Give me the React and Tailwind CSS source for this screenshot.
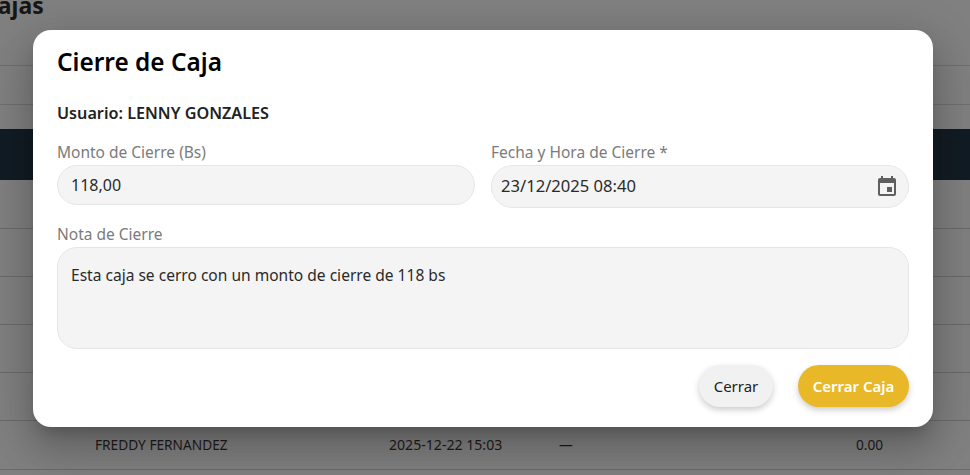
const font = "font-['Noto_Sans','Open_Sans',sans-serif]";

function Row({ name, date, dash, amount, height = "h-12" }) {
  return (
    <div className={`${height} border-b border-[#6a6a6a] flex items-center text-[13.7px] text-[#1f1a1a]`}>
      <span className="w-[389px] pl-[95px]">{name}</span>
      <span className="w-[170px] text-[14.1px]">{date}</span>
      <span className="w-[297px]">{dash}</span>
      <span>{amount}</span>
    </div>
  );
}

function Field({ label, className, children }) {
  return (
    <div className={className}>
      <label className="block text-[15.5px] leading-5 text-[#7b7b7b] mb-[3px]">{label}</label>
      {children}
    </div>
  );
}

export default function App() {
  return (
    <div className={`relative h-[475px] w-[970px] overflow-hidden bg-[#808080] ${font}`}>
      {/* pagina de fondo */}
      <div className="text-[23px] font-bold leading-none text-[#161616] -ml-[17px] -mt-[8px] h-[74px] border-b border-[#6f6f6f] pt-[2px]">Cajas</div>
      <div className="h-[39px] border-b border-[#6f6f6f]"></div>
      <div className="h-[24px]"></div>
      <div className="h-[51px] bg-[#121c24]"></div>
      <Row height="h-[49px]" />
      <Row />
      <Row />
      <Row />
      <Row />
      <Row height="h-[49px]" name="FREDDY FERNANDEZ" date="2025-12-22 15:03" dash="—" amount="0.00" />

      <div className="absolute left-[33px] top-[30px] w-[900px] h-[397px] bg-white rounded-[18px] px-6 pt-[17px] shadow-[0_11px_15px_-7px_rgba(0,0,0,0.2),0_24px_38px_3px_rgba(0,0,0,0.14),0_9px_46px_8px_rgba(0,0,0,0.12)]">
        <h2 className="text-[24.4px] leading-[30px] font-semibold text-black">Cierre de Caja</h2>
        <p className="mt-[26px] text-[16.2px] leading-5 font-semibold text-[#222]">Usuario: LENNY GONZALES</p>
        <div className="mt-[19px] flex gap-4 items-start">
          <Field label="Monto de Cierre (Bs)" className="flex-1">
            <input readOnly value="118,00" className="w-full h-10 px-[13px] rounded-[20px] bg-[#f4f4f4] border border-[#e6e6e6] text-[16px] text-[#2a2a2a] outline-none" />
          </Field>
          <Field label="Fecha y Hora de Cierre *" className="flex-1">
            <div className="flex items-center justify-between h-[43px] pl-[9px] pr-[9px] rounded-[22px] bg-[#f4f4f4] border border-[#e6e6e6] text-[16.6px] text-[#2a2a2a]">
              <span>23/12/2025 08:40</span>
              <svg width="24" height="24" viewBox="0 0 24 24" fill="#5f5f5f">
                <path d="M17 12h-5v5h5v-5zM16 1v2H8V1H6v2H5c-1.11 0-1.99.9-1.99 2L3 19c0 1.1.89 2 2 2h14c1.1 0 2-.9 2-2V5c0-1.1-.9-2-2-2h-1V1h-2zm3 18H5V8h14v11z" />
              </svg>
            </div>
          </Field>
        </div>
        <Field label="Nota de Cierre" className="mt-4">
          <textarea readOnly value="Esta caja se cerro con un monto de cierre de 118 bs" className="block w-full h-[102px] resize-none px-[13px] py-[17px] rounded-[20px] bg-[#f4f4f4] border border-[#e6e6e6] text-[15.55px] leading-5 text-[#2a2a2a] outline-none" />
        </Field>
        <div className="mt-4 flex justify-end gap-[25px]">
          <button className="h-[42px] w-[74px] rounded-[21px] bg-[#f1f1f1] text-[15px] text-[#222] shadow-[0_3px_6px_rgba(0,0,0,0.2)]">Cerrar</button>
          <button className="h-[42px] w-[111px] rounded-[21px] bg-[#e8b828] text-[15px] font-semibold text-white shadow-[0_3px_6px_rgba(0,0,0,0.2)]">Cerrar Caja</button>
        </div>
      </div>
    </div>
  );
}
